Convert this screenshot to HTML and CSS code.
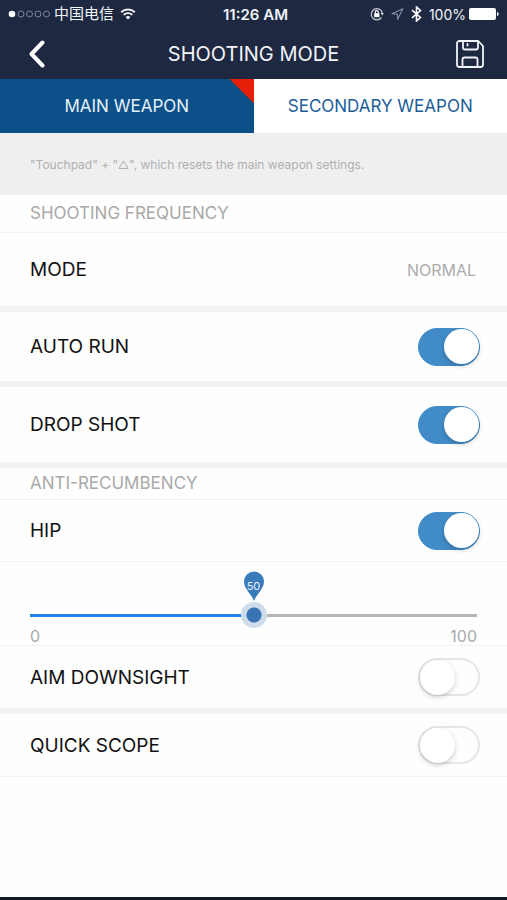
FILE: index.html
```html
<!DOCTYPE html>
<html lang="en">
<head>
<meta charset="utf-8">
<meta name="viewport" content="width=device-width, initial-scale=1">
<title>Shooting Mode</title>
<link rel="stylesheet" href="styles.css">
</head>
<body>
<header class="top">
  <div class="status">
    <div class="status-left">
      <svg width="42" height="10" viewBox="0 0 42 10" fill="none" stroke="#7d8596" stroke-width="1"><circle cx="4" cy="5" r="3.3" fill="#fff" stroke="none"/><circle cx="13" cy="5" r="3"/><circle cx="21.5" cy="5" r="3"/><circle cx="30" cy="5" r="3"/><circle cx="38.5" cy="5" r="3"/></svg>
      <span class="carrier" lang="zh">中国电信</span>
      <svg class="wifi" width="16" height="12" viewBox="0 0 16 12" fill="none" stroke="#f4f6fa" stroke-width="1.9"><path d="M1.2 4.2a9.8 9.8 0 0 1 13.6 0M3.7 6.9a6.2 6.2 0 0 1 8.6 0"/><path d="M8 11.6 5.6 9.1a3.4 3.4 0 0 1 4.8 0z" fill="#f4f6fa" stroke="none"/></svg>
    </div>
    <span class="clock">11:26 AM</span>
    <div class="status-right">
      <svg width="14" height="14" viewBox="0 0 14 14" fill="none" stroke="#c9ced8" stroke-width="1.2"><path d="M11.5 10.4A5.6 5.6 0 1 1 12.4 6.4"/><path d="M10.5 6h3.4l-1.7 2.4z" fill="#c9ced8" stroke="none"/><rect x="4.2" y="6.2" width="5.2" height="4" fill="#fff" stroke="none"/><path d="M5.3 6.5V5.2a1.5 1.5 0 0 1 3 0v1.3" stroke="#fff"/></svg>
      <svg width="13" height="12" viewBox="0 0 13 12" fill="none" stroke="#8b93a3" stroke-width="1.1" stroke-linejoin="round"><path d="M11.8.8 1 5.7l5.3.5.4 5z"/></svg>
      <svg width="11" height="16" viewBox="0 0 11 16" fill="none" stroke="#fff" stroke-width="1.6"><path d="m1 4.2 8.500 7.300L5.500 15V1l4 3.500L1 11.800"/></svg>
      <span class="percent">100%</span>
      <svg width="30" height="12" viewBox="0 0 30 12" fill="#fff"><rect width="27" height="12" rx="2"/><path d="M28 4c2.200.6 2.200 3.400 0 4z"/></svg>
    </div>
  </div>
  <div class="nav">
    <button class="icon-button" type="button" aria-label="Back"><svg width="18" height="28" viewBox="0 0 18 28" fill="none" stroke="#fff" stroke-width="4" stroke-linecap="round" stroke-linejoin="round"><path d="M14.500 2.500 3.500 14l11 11.500"/></svg></button>
    <h1>SHOOTING MODE</h1>
    <button class="icon-button" type="button" aria-label="Save"><svg width="28" height="28" viewBox="0 0 28 28" fill="none" stroke="#f1f4f9" stroke-width="1.800" stroke-linejoin="round" stroke-linecap="round"><path d="M3.500 1h18.700L27 6v18.500a2.500 2.500 0 0 1-2.500 2.500h-21A2.500 2.500 0 0 1 1 24.500v-21A2.500 2.500 0 0 1 3.500 1z"/><path d="M7 1.500v6a2 2 0 0 0 2 2h11a2 2 0 0 0 2-2v-6M11.500 4v1.500M6.500 26.500v-7a2 2 0 0 1 2-2h11a2 2 0 0 1 2 2v7"/></svg></button>
  </div>
</header>
<nav class="tabs" aria-label="Weapon">
  <button class="tab active" type="button">MAIN WEAPON</button>
  <button class="tab" type="button">SECONDARY WEAPON</button>
</nav>
<main>
  <p class="note">"Touchpad" + "<svg width="11" height="9" viewBox="0 0 11 9" fill="none" stroke="currentColor" role="img" aria-label="triangle"><path d="M5.500 1 10 8.500H1z"/></svg>", which resets the main weapon settings.</p>
  <section>
    <h2>SHOOTING FREQUENCY</h2>
    <div class="row tall"><span>MODE</span><span class="value">NORMAL</span></div>
  </section>
  <section class="row medium"><label for="run">AUTO RUN</label><input class="switch" id="run" type="checkbox" role="switch" checked></section>
  <section class="row tall"><label for="drop">DROP SHOT</label><input class="switch" id="drop" type="checkbox" role="switch" checked></section>
  <section>
    <h2 class="compact">ANTI-RECUMBENCY</h2>
    <div class="row line"><label for="hip">HIP</label><input class="switch" id="hip" type="checkbox" role="switch" checked></div>
    <div class="slider line">
      <output class="pin" for="amount"><svg width="22" height="31" viewBox="0 0 22 31" fill="#397bbb"><path d="M11 30C8.500 23 1 18 1 10.500a10 10 0 0 1 20 0C21 18 13.500 23 11 30z"/></svg><span>50</span></output>
      <input id="amount" type="range" min="0" max="100" value="50" aria-label="Hip anti-recumbency">
      <div class="scale"><span>0</span><span>100</span></div>
    </div>
    <div class="row"><label for="aim">AIM DOWNSIGHT</label><input class="switch" id="aim" type="checkbox" role="switch"></div>
  </section>
  <section class="row last"><label for="scope">QUICK SCOPE</label><input class="switch" id="scope" type="checkbox" role="switch"></section>
</main>
</body>
</html>
```
FILE: styles.css
```css
* { box-sizing: border-box; }
body {
  margin: 0;
  min-height: 100vh;
  background: #fefefe;
  border-bottom: 3px solid #111a24;
  color: #111;
  font-family: Inter, "Noto Sans CJK SC", sans-serif;
  font-size: 19px;
}
svg { display: block; flex: none; }
button { border: 0; padding: 0; background: none; font: inherit; }

.top { background: #1e2941; color: #f1f4f9; }
.status {
  display: grid;
  grid-template-columns: 1fr auto 1fr;
  align-items: center;
  height: 28px;
  padding: 0 8px;
  font-size: 14px;
}
.status-left, .status-right { display: flex; align-items: center; }
.status-right { justify-content: flex-end; gap: 7px; }
.carrier { margin-left: 4px; font-size: 15px; line-height: 20px; }
.wifi { margin-left: 6px; }
.clock { padding-left: 4px; font-size: 15px; font-weight: 600; }
.percent { margin-right: -4px; }
.nav {
  display: flex;
  align-items: center;
  justify-content: space-between;
  height: 51px;
  padding: 0 22px;
}
h1 { margin: 0; font-size: 20px; font-weight: 400; }
.icon-button { display: flex; justify-content: center; width: 30px; }

.tabs { display: flex; height: 54px; }
.tab { flex: 1; background: #fff; color: #1b5e98; font-size: 17px; }
.tab.active {
  background: linear-gradient(225deg, #e62008 17px, transparent 17px), #0b5088;
  color: #e6f0fa;
}

.note {
  display: flex;
  align-items: center;
  height: 62px;
  margin: 0;
  padding: 0 30px;
  background: #efefef;
  color: #b0b0b0;
  font-size: 12px;
  white-space: pre-wrap;
}
section { border-bottom: 6px solid #f2f2f2; }
h2 {
  margin: 0;
  padding: 0 30px;
  border-bottom: 1px solid #f2f2f2;
  color: #a9a9a9;
  font-size: 17px;
  font-weight: 400;
  line-height: 37px;
}
h2.compact { line-height: 31px; }
.row {
  display: flex;
  align-items: center;
  justify-content: space-between;
  height: 62px;
  padding: 0 27px 0 30px;
}
.row.tall { height: 73px; }
section.row { box-sizing: content-box; }
.row.medium { height: 69px; }
.row.line, .slider.line { border-bottom: 1px solid #f2f2f2; }
section.last { border-bottom-width: 1px; }
.value { margin-right: 4px; color: #acacac; font-size: 16px; }
section.row.tall { height: 75px; }

.switch {
  appearance: none;
  display: flex;
  align-items: center;
  width: 62px;
  height: 38px;
  margin: 0;
  border: 2px solid #e6e6e6;
  border-radius: 19px;
  background: #fefefe;
}
.switch::before {
  content: "";
  width: 35px;
  height: 35px;
  border-radius: 50%;
  background: #fff;
  box-shadow: 0 2px 5px #0003;
}
.switch:checked {
  justify-content: flex-end;
  border-width: 1px;
  border-color: #418cc8;
  background: #418cc8;
}

.slider { height: 84px; padding: 9px 30px 0; }
.pin { display: grid; justify-items: center; }
.pin > * { grid-area: 1 / 1; }
.pin span { padding-top: 8px; color: #e8f3ff; font-size: 11px; line-height: 14px; }
input[type="range"] {
  appearance: none;
  display: block;
  width: 100%;
  height: 26px;
  margin: 0;
  background: linear-gradient(90deg, #1f82ea 50%, #b5b5b5 50%) center / 100% 3px no-repeat;
}
input[type="range"]::-webkit-slider-thumb {
  appearance: none;
  width: 26px;
  height: 26px;
  border-radius: 50%;
  background: radial-gradient(circle, #3a73b4 7px, #cfddeb 8px);
}
.scale {
  display: flex;
  justify-content: space-between;
  color: #aaa;
  font-size: 16px;
  line-height: 16px;
}
```
